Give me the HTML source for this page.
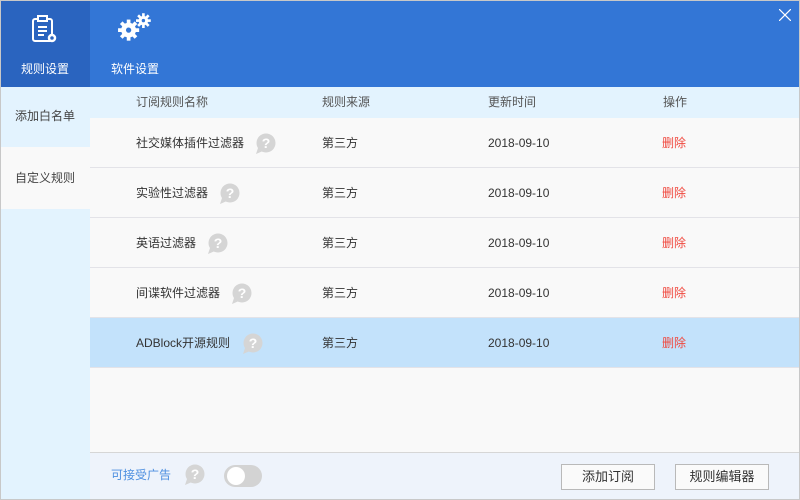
<!DOCTYPE html>
<html><head><meta charset="utf-8"><style>
*{margin:0;padding:0;box-sizing:border-box}
body{width:800px;height:500px;overflow:hidden;font-family:"Liberation Sans","Noto Sans CJK SC",sans-serif;font-size:12px;color:#333;background:#f9f9f9;position:relative}
.abs{position:absolute}
.hdr{left:0;top:0;width:800px;height:87px;background:#3376d6}
.tab1{left:0;top:0;width:90px;height:87px;background:#2a64bf}
.tabt{color:#fff;font-size:12px;top:61px;line-height:16px}
.side{left:0;top:87px;width:90px;height:413px;background:#e3f3fe}
.sel{left:0;top:147px;width:90px;height:62px;background:#f9f9f9}
.st{color:#444;left:15px;font-size:12px;line-height:16px}
.th{left:90px;top:87px;width:710px;height:31px;background:#e3f3fe}
.row{left:90px;width:710px;height:50px;border-bottom:1px solid #e3e3e8;background:#f9f9f9}
.t{position:absolute;font-size:12px;color:#333;white-space:nowrap;line-height:16px;height:16px}
.del{color:#f0483e}
.q{position:absolute;width:22px;height:22px}
.foot{left:90px;top:452px;width:710px;height:48px;background:#eef3fb;border-top:1px solid #d6d6d6}
.btn{position:absolute;top:464px;height:26px;border:1px solid #b9b9b9;background:#fafafa;font-size:13px;color:#333;text-align:center;line-height:24px}
</style></head><body>
<div class="abs hdr"></div>
<div class="abs tab1"></div>
<svg class="abs" style="left:30px;top:14px" width="32" height="32" viewBox="0 0 32 32" fill="none" stroke="#fff" stroke-width="2"><rect x="3" y="5" width="19" height="22" rx="2"/><rect x="8" y="2" width="9" height="5" fill="#2a64bf"/><line x1="8" y1="13" x2="17" y2="13"/><line x1="8" y1="17" x2="17" y2="17"/><line x1="8" y1="21" x2="14" y2="21"/><circle cx="22" cy="24" r="3" fill="#2a64bf" stroke-width="2.5"/></svg>
<div class="abs tabt" style="left:21px">规则设置</div>
<svg class="abs" style="left:117px;top:12px" width="38" height="32" viewBox="0 0 36 30"><g fill="#fff"><circle cx="11" cy="17" r="7"/><g stroke="#fff" stroke-width="3.5"><line x1="11" y1="7" x2="11" y2="27"/><line x1="1" y1="17" x2="21" y2="17"/><line x1="4" y1="10" x2="18" y2="24"/><line x1="18" y1="10" x2="4" y2="24"/></g><circle cx="11" cy="17" r="2.5" fill="#3376d6"/><circle cx="25" cy="8" r="4.5"/><g stroke="#fff" stroke-width="2.5"><line x1="25" y1="1" x2="25" y2="15"/><line x1="18" y1="8" x2="32" y2="8"/><line x1="20" y1="3" x2="30" y2="13"/><line x1="30" y1="3" x2="20" y2="13"/></g><circle cx="25" cy="8" r="1.6" fill="#3376d6"/></g></svg>
<div class="abs tabt" style="left:111px">软件设置</div>
<svg class="abs" style="left:779px;top:9px" width="12" height="12" viewBox="0 0 12 12" stroke="#fff" stroke-width="1.2"><line x1="0" y1="0" x2="12" y2="12"/><line x1="12" y1="0" x2="0" y2="12"/></svg>

<div class="abs side"></div>
<div class="abs sel"></div>
<div class="abs st" style="top:108px">添加白名单</div>
<div class="abs st" style="top:170px">自定义规则</div>

<div class="abs th"></div>
<div class="t" style="left:136px;top:94px;color:#555">订阅规则名称</div>
<div class="t" style="left:322px;top:94px;color:#555">规则来源</div>
<div class="t" style="left:488px;top:94px;color:#555">更新时间</div>
<div class="t" style="left:663px;top:94px;color:#555">操作</div>

<div class="abs row" style="top:118px"></div>
<div class="abs row" style="top:168px"></div>
<div class="abs row" style="top:218px"></div>
<div class="abs row" style="top:268px"></div>
<div class="abs row" style="top:318px;background:#c3e2fb"></div>

<div class="t" style="left:136px;top:135px">社交媒体插件过滤器</div>
<div class="t" style="left:136px;top:185px">实验性过滤器</div>
<div class="t" style="left:136px;top:235px">英语过滤器</div>
<div class="t" style="left:136px;top:285px">间谍软件过滤器</div>
<div class="t" style="left:136px;top:335px">ADBlock开源规则</div>

<div class="t" style="left:322px;top:135px">第三方</div>
<div class="t" style="left:322px;top:185px">第三方</div>
<div class="t" style="left:322px;top:235px">第三方</div>
<div class="t" style="left:322px;top:285px">第三方</div>
<div class="t" style="left:322px;top:335px">第三方</div>

<div class="t" style="left:488px;top:135px">2018-09-10</div>
<div class="t" style="left:488px;top:185px">2018-09-10</div>
<div class="t" style="left:488px;top:235px">2018-09-10</div>
<div class="t" style="left:488px;top:285px">2018-09-10</div>
<div class="t" style="left:488px;top:335px">2018-09-10</div>

<div class="t del" style="left:662px;top:135px">删除</div>
<div class="t del" style="left:662px;top:185px">删除</div>
<div class="t del" style="left:662px;top:235px">删除</div>
<div class="t del" style="left:662px;top:285px">删除</div>
<div class="t del" style="left:662px;top:335px">删除</div>

<svg width="0" height="0" style="position:absolute"><defs><symbol id="q" viewBox="0 0 22 22"><circle cx="12" cy="10" r="9.5" fill="#d5d5d5"/><path d="M4 15 L2 21 L9 18 Z" fill="#d5d5d5"/><text x="12" y="15" text-anchor="middle" font-family="Liberation Sans" font-weight="bold" font-size="14" fill="#fff">?</text></symbol></defs></svg>
<svg class="q" style="left:254px;top:133px"><use href="#q"/></svg>
<svg class="q" style="left:218px;top:183px"><use href="#q"/></svg>
<svg class="q" style="left:206px;top:233px"><use href="#q"/></svg>
<svg class="q" style="left:230px;top:283px"><use href="#q"/></svg>
<svg class="q" style="left:241px;top:333px"><use href="#q"/></svg>

<div class="abs foot"></div>
<div class="t" style="left:111px;top:467px;color:#4d8fe0">可接受广告</div>
<svg class="q" style="left:183px;top:464px"><use href="#q"/></svg>
<div class="abs" style="left:224px;top:465px;width:38px;height:22px;border-radius:11px;background:#d3d3d3"></div>
<div class="abs" style="left:227px;top:467px;width:18px;height:18px;border-radius:9px;background:#fff"></div>
<div class="btn" style="left:561px;width:94px">添加订阅</div>
<div class="btn" style="left:675px;width:94px">规则编辑器</div>
<div class="abs" style="left:0;top:0;width:800px;height:500px;border:1px solid #c8c8c8;pointer-events:none"></div>
</body></html>
